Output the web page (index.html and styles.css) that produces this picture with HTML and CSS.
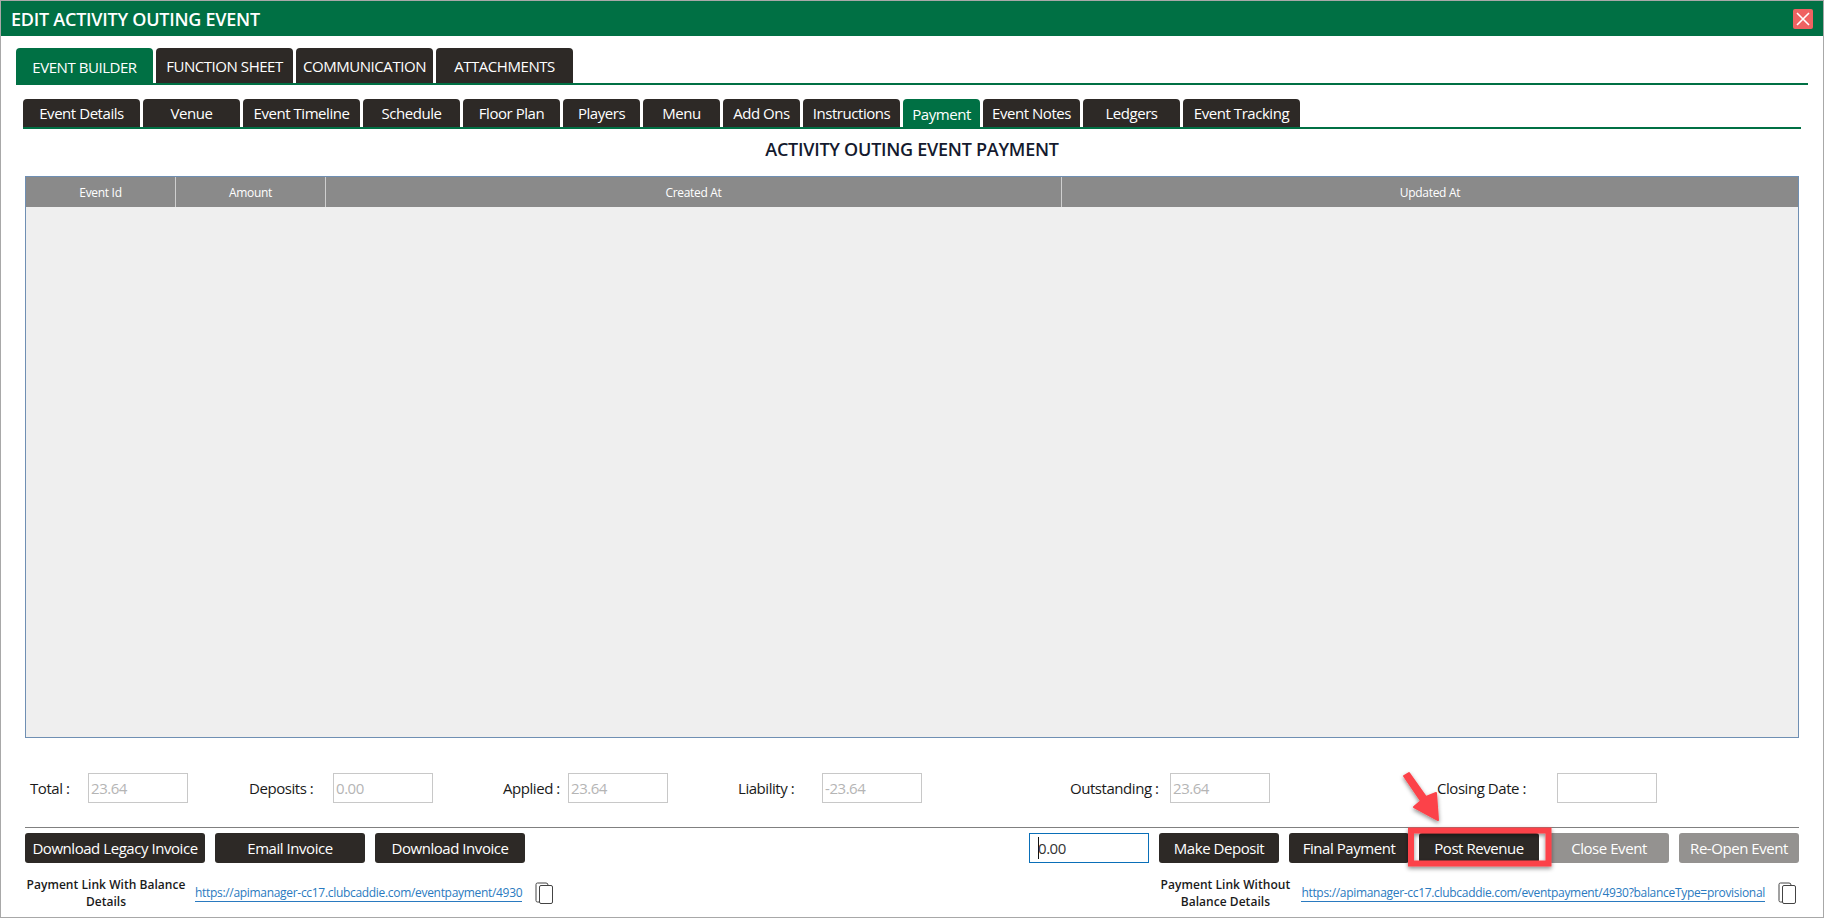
FILE: index.html
```html
<!DOCTYPE html>
<html lang="en">
<head>
<meta charset="utf-8">
<title>Edit Activity Outing Event</title>
<link rel="stylesheet" href="styles.css">
</head>
<body>
<div class="window">
  <header class="titlebar">
    <h1 class="title">EDIT ACTIVITY OUTING EVENT</h1>
    <button class="close" aria-label="Close"><svg viewBox="0 0 20 20" width="20" height="20"><path d="M4 4 16 16M16 4 4 16" stroke="#fff" stroke-width="1.6" fill="none"/></svg></button>
  </header>
  <nav class="tabs tabs-main">
    <a class="tab tab-main active">EVENT BUILDER</a>
    <a class="tab tab-main">FUNCTION SHEET</a>
    <a class="tab tab-main">COMMUNICATION</a>
    <a class="tab tab-main">ATTACHMENTS</a>
  </nav>
  <nav class="tabs tabs-sub">
    <a class="tab w117">Event Details</a>
    <a class="tab w97">Venue</a>
    <a class="tab w117">Event Timeline</a>
    <a class="tab w97">Schedule</a>
    <a class="tab w97">Floor Plan</a>
    <a class="tab w77">Players</a>
    <a class="tab w77">Menu</a>
    <a class="tab w77">Add Ons</a>
    <a class="tab w97">Instructions</a>
    <a class="tab w77 active">Payment</a>
    <a class="tab w97">Event Notes</a>
    <a class="tab w97">Ledgers</a>
    <a class="tab w117">Event Tracking</a>
  </nav>
  <h2 class="heading">ACTIVITY OUTING EVENT PAYMENT</h2>
  <div class="grid">
    <div class="grid-head">
      <div class="cell">Event Id</div>
      <div class="cell">Amount</div>
      <div class="cell">Created At</div>
      <div class="cell">Updated At</div>
    </div>
  </div>
  <div class="summary">
    <label class="lab lab-total">Total :</label><input class="field f-total" value="23.64" disabled>
    <label class="lab lab-dep">Deposits :</label><input class="field f-dep" value="0.00" disabled>
    <label class="lab lab-app">Applied :</label><input class="field f-app" value="23.64" disabled>
    <label class="lab lab-lia">Liability :</label><input class="field f-lia" value="-23.64" disabled>
    <label class="lab lab-out">Outstanding :</label><input class="field f-out" value="23.64" disabled>
    <label class="lab lab-clo">Closing Date :</label><input class="field f-clo" disabled>
  </div>
  <div class="actions">
    <div class="group">
      <button class="btn w180">Download Legacy Invoice</button>
      <button class="btn w150">Email Invoice</button>
      <button class="btn w150">Download Invoice</button>
    </div>
    <div class="group">
      <div class="amount"><span class="caret"></span>0.00</div>
      <button class="btn">Make Deposit</button>
      <button class="btn">Final Payment</button>
      <button class="btn">Post Revenue</button>
      <button class="btn off">Close Event</button>
      <button class="btn off">Re-Open Event</button>
    </div>
  </div>
  <div class="links">
    <div class="linkset">
      <div class="linklabel l-with">Payment Link With Balance Details</div>
      <a class="link">https://apimanager-cc17.clubcaddie.com/eventpayment/4930</a>
      <svg class="copy" viewBox="0 0 18 22" width="18" height="22"><path d="M4.500 20H2.500A1.500 1.500 0 0 1 1 18.500V2.500A1.500 1.500 0 0 1 2.500 1H11A2 2 0 0 1 13 3" fill="none" stroke="#444" stroke-width="1"/><rect x="4.500" y="3.500" width="13" height="18" rx="1.500" fill="#fff" stroke="#444" stroke-width="1"/></svg>
    </div>
    <div class="linkset">
      <div class="linklabel l-without">Payment Link Without Balance Details</div>
      <a class="link">https://apimanager-cc17.clubcaddie.com/eventpayment/4930?balanceType=provisional</a>
      <svg class="copy" viewBox="0 0 18 22" width="18" height="22"><path d="M4.500 20H2.500A1.500 1.500 0 0 1 1 18.500V2.500A1.500 1.500 0 0 1 2.500 1H11A2 2 0 0 1 13 3" fill="none" stroke="#444" stroke-width="1"/><rect x="4.500" y="3.500" width="13" height="18" rx="1.500" fill="#fff" stroke="#444" stroke-width="1"/></svg>
    </div>
  </div>
  <svg class="annotation" viewBox="0 0 180 110" width="180" height="110">
    <defs><filter id="sh" x="-20%" y="-20%" width="140%" height="140%"><feDropShadow dx="0" dy="2" stdDeviation="2" flood-color="#000" flood-opacity=".45"/></filter></defs>
    <g filter="url(#sh)">
      <rect x="23" y="69.500" width="137.500" height="33" fill="none" stroke="#fc4349" stroke-width="6"/>
      <path d="M16 15 33 40 26 46 50 59 48 32 38 36 21 12Z" fill="#fc4349" stroke="#fc4349" stroke-width="2" stroke-linejoin="round"/>
    </g>
  </svg>
</div>
</body>
</html>
```
FILE: styles.css
```css
* { box-sizing: border-box; }
html, body { margin: 0; height: 100%; background: #fff; }
body { font-family: "Open Sans", "Noto Sans", "Liberation Sans", sans-serif; font-size: 15px; color: #1a1a1a; overflow: hidden; }
.window { position: relative; width: 1824px; height: 918px; border: 1px solid #a8a8a8; background: #fff; }
.titlebar { height: 35px; background: #007044; display: flex; align-items: center; justify-content: space-between; padding: 0 10px; }
.title { margin: 0; font-size: 18px; font-weight: 600; color: #fff; letter-spacing: -.25px; }
.close { width: 20px; height: 20px; padding: 0; border: 0; border-radius: 2px; background: #ef6262; display: block; }
.close svg { display: block; }
.tabs { display: flex; gap: 3px; border-bottom: 2px solid #007044; }
.tabs-main { margin: 12px 15px 0 15px; height: 37px; }
.tabs-sub { margin: 14px 22px 0 22px; height: 30px; }
.tab { display: flex; align-items: center; justify-content: center; height: 100%; background: #2d2926; color: #fff; border-radius: 4px 4px 0 0; font-size: 15px; letter-spacing: -.45px; white-space: nowrap; margin-bottom: -2px; }
.tabs-sub .tab { height: 28px; margin-bottom: 0; }
.tab-main { width: 137px; height: 35px; margin-bottom: 0; }
.tab.active { background: #007044; }
.tab-main.active { height: 37px; margin-bottom: -2px; }
.tabs-sub .tab.active { height: 30px; }
.w117 { width: 117px; }
.w97 { width: 97px; }
.w77 { width: 77px; }
.heading { margin: 0; height: 47px; padding-top: 9px; text-align: center; font-size: 18px; line-height: 22px; font-weight: 600; color: #141a2e; letter-spacing: -.26px; }
.grid { margin: 0 24px; height: 562px; border: 1px solid #6f8fb3; background: #efefef; }
.grid-head { display: grid; grid-template-columns: 150px 150px 736px 1fr; height: 30px; background: #8a8a8a; }
.cell { display: flex; align-items: center; justify-content: center; color: #fff; font-size: 12px; letter-spacing: -.3px; border-right: 1px solid #cfcfcf; }
.cell:last-child { border-right: 0; }
.summary { display: flex; align-items: center; margin: 35px 0 0 0; height: 30px; }
.lab { letter-spacing: -.45px; white-space: nowrap; color: #1a1a1a; }
.field { width: 100px; height: 30px; padding: 0 2px; border: 1px solid #c8c8c8; background: #fff; font: inherit; letter-spacing: -.45px; color: #b5b5b5; }
.lab-total { margin-left: 29px; width: 58px; }
.lab-dep { margin-left: 61px; width: 84px; }
.lab-app { margin-left: 70px; width: 65px; }
.lab-lia { margin-left: 70px; width: 84px; }
.lab-out { margin-left: 148px; width: 100px; }
.lab-clo { margin-left: 167px; width: 120px; }
.actions { display: flex; justify-content: space-between; margin: 24px 24px 0; padding-top: 5px; border-top: 1px solid #808080; }
.group { display: flex; gap: 10px; }
.btn { width: 120px; height: 30px; padding: 0; border: 0; border-radius: 3px; background: #2d2926; color: #fff; font: inherit; letter-spacing: -.45px; white-space: nowrap; }
.btn.w180 { width: 180px; }
.btn.w150 { width: 150px; }
.btn.off { background: #949290; }
.amount { width: 120px; height: 30px; border: 1px solid #0a6fb8; display: flex; align-items: center; padding-left: 8px; letter-spacing: -.45px; color: #333; }
.caret { width: 1px; height: 22px; background: #111; margin-right: -1px; }
.links { display: flex; justify-content: space-between; margin: 13px 27px 0 25px; }
.linkset { display: flex; align-items: center; }
.linklabel { text-align: center; font-size: 12px; line-height: 17px; font-weight: 600; letter-spacing: .04px; color: #1a1a1a; width: 160px; }
.l-without { width: 134px; }
.link { margin-left: 9px; font-size: 12px; line-height: 17px; color: #2a7ac0; border-bottom: 1px solid #2a7ac0; letter-spacing: -.31px; white-space: nowrap; }
.copy { margin-left: 13px; display: block; }
.annotation { position: absolute; left: 1387px; top: 760px; overflow: visible; pointer-events: none; }
```
